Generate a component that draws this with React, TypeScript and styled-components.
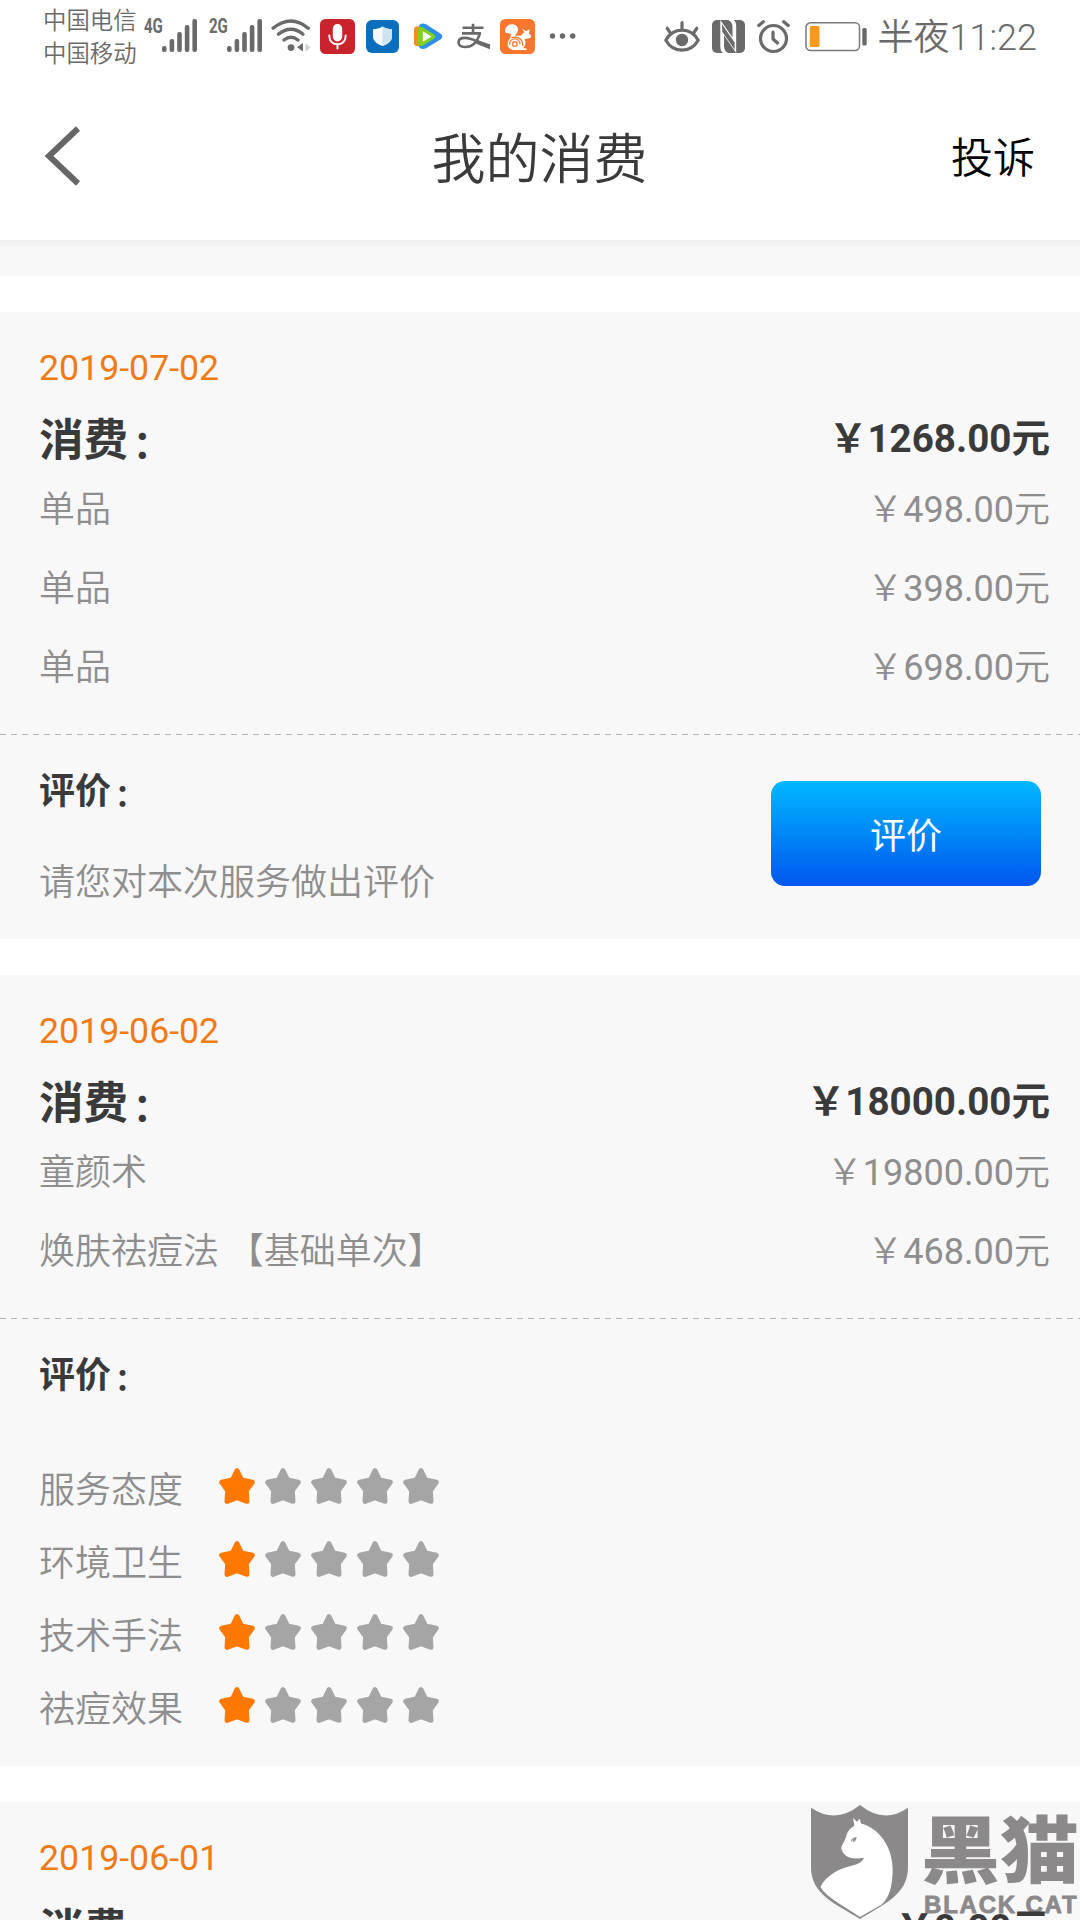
import React from "react";
import styled, { createGlobalStyle } from "styled-components";

const GlobalStyle = createGlobalStyle`
  * { box-sizing: border-box; }
  body { margin: 0; background: #fff; }
`;

const Screen = styled.div`
  width: 1080px;
  height: 1920px;
  overflow: hidden;
  display: flex;
  flex-direction: column;
  background: #fff;
  color: #3a3a3a;
  font-family: Roboto, "Noto Sans CJK SC", sans-serif;
  font-size: 36px;
`;

/* ---------- status bar ---------- */

const StatusBar = styled.div`
  flex: none;
  height: 74px;
  padding: 0 43px 0 43px;
  display: flex;
  justify-content: space-between;
  color: #6a6a6a;
`;

const StatusGroup = styled.div`
  display: flex;
  align-items: flex-start;
`;

const Carriers = styled.div`
  padding-top: 5px;
  width: 101px;
  font-size: 23.4px;
  line-height: 33px;
  font-weight: 350;
  white-space: nowrap;
`;

const NetLabel = styled.span<{ $ml?: number }>`
  width: 18px;
  margin-left: ${(p) => p.$ml ?? 0}px;
  padding-top: 16px;
  font-size: 20px;
  line-height: 20px;
  font-weight: 700;
  white-space: nowrap;
  transform: scaleX(0.75);
  transform-origin: left;
`;

const StatusIcon = styled.svg<{ $w: number; $h: number; $ml: number; $mt: number }>`
  flex: none;
  display: block;
  width: ${(p) => p.$w}px;
  height: ${(p) => p.$h}px;
  margin: ${(p) => p.$mt}px 0 0 ${(p) => p.$ml}px;
`;

const Clock = styled.span`
  margin-left: 11px;
  padding-top: 14px;
  font-size: 36px;
  line-height: 48px;
  font-weight: 350;
  white-space: nowrap;
`;

const SignalBars = () => (
  <StatusIcon $w={35} $h={33} $ml={0} $mt={19} viewBox="0 0 35 33">
    {[27, 20, 13, 6, 0].map((y, i) => (
      <rect key={i} x={i * 7.6} y={y} width={4.6} height={33 - y} rx={2} fill="#6a6a6a" />
    ))}
  </StatusIcon>
);

const WifiIcon = () => (
  <StatusIcon $w={40} $h={33} $ml={9} $mt={19} viewBox="0 0 40 33">
    <g fill="none" stroke="#6a6a6a" strokeWidth="3.4" strokeLinecap="round">
      <path d="M2.2 9.2Q20-5 37.2 9.2" />
      <path d="M7.5 15.2Q20 5.3 32 15.2" />
      <path d="M13 21Q20 15.5 27 21" />
    </g>
    <circle cx="20" cy="28.6" r="3.4" fill="#6a6a6a" />
    <path d="M32 24v8.5l-6-4.2z" fill="#6a6a6a" />
    <path d="M34.5 24.5v8l5-4z" fill="#cfcfcf" />
  </StatusIcon>
);

const MicIcon = () => (
  <StatusIcon $w={35} $h={35} $ml={9} $mt={19} viewBox="0 0 35 35">
    <rect width="35" height="35" rx="5.5" fill="#c9242b" />
    <rect x="12.8" y="5" width="9.4" height="17.5" rx="4.7" fill="#fff" />
    <path d="M9.3 16.5c0 5.500 3.500 8.800 8.200 8.800s8.200-3.300 8.200-8.800M17.500 25v4.500" fill="none" stroke="#fff" strokeWidth="2" strokeLinecap="round" />
  </StatusIcon>
);

const ShieldAppIcon = () => (
  <StatusIcon $w={33} $h={33} $ml={11} $mt={20} viewBox="0 0 33 33">
    <rect width="33" height="33" rx="6" fill="#0c6fbe" />
    <path d="M16.500 6.500c3 2 6 2.700 9.500 2.700v7.300c0 4.500-4.500 8-9.500 9.500-5-1.500-9.500-5-9.500-9.500V9.200c3.500 0 6.500-.7 9.500-2.700z" fill="#f4f9fd" />
    <path d="M16.500 6.500c3 2 6 2.700 9.500 2.700v7.300c0 4.500-4.500 8-9.500 9.500z" fill="#cfe3f2" />
  </StatusIcon>
);

const VideoIcon = () => (
  <StatusIcon $w={29} $h={27} $ml={15} $mt={23} viewBox="0 0 29 27">
    <path d="M5 3C6 .5 9 0 12 1.300l14 9c3 2.200 3 4.500 0 6.500l-14 8.500c-3 1.500-6 .7-7-1.500z" fill="#2f8fe6" />
    <path d="M0 6.500C.3 3.500 2.500 2.700 5 3.700V23c-2.500.8-4.700 0-5-2.500z" fill="#ff8a1e" />
    <path d="M4 5.200c1-1.700 3-1.900 5-.7l11 7c1.800 1.200 1.800 2.800 0 4l-11 7c-2 1.100-4.200 1-5-1z" fill="#7fd01f" />
    <path d="M8.800 8.200l8.700 5.300-8.700 5.200z" fill="#fff" />
  </StatusIcon>
);

const PayIcon = () => (
  <StatusIcon $w={34} $h={27} $ml={14} $mt={23} viewBox="0 0 34 27">
    <g fill="none" stroke="#6a6a6a">
      <path d="M5.500 4.800h21M16 .8v9.200M5 10.400h19" strokeWidth="2.600" />
      <path d="M23 10.300C20.500 18 15.500 24 8.500 24c-4.300 0-7-1.600-7-4.500s2.700-4.600 6.500-4.600c6 0 13 3.800 25 8.200" strokeWidth="2.600" />
    </g>
    <path d="M19 16.800c4.500 1.700 9 3.200 14 4.500v4.900c-5-1.800-10.500-4-15-6.200z" fill="#6a6a6a" />
  </StatusIcon>
);

const SquirrelIcon = () => (
  <StatusIcon $w={35} $h={35} $ml={9} $mt={19} viewBox="0 0 35 35">
    <rect width="35" height="35" rx="5.500" fill="#f8762e" />
    <path d="M5 13C4.800 8 8 5.200 12 5.200c4 0 6.300 2.700 6 6-.3 2.800-2.600 4-2.800 6.300 1.800-1 4-1.300 6-.9.800-1.600 1.900-2.500 3-3.400l-2-3.700 3.800 2.700 3.700-2-.8 4.200c1.800 1.200 2.600 2.800 2 3.900-1.300 1.500-4 1.500-6.300 1.700 1.700 3.400.8 7-1.600 9.200h3.500v1.800H13.500c-4.200-.6-6.400-3.400-5.700-7.300.6-3 3.200-5 3.200-8C10.800 13.500 8 15.800 5 13z" fill="#fff" />
    <path d="M9.500 25.500c0-3.200 2.300-5.600 5.300-5.600s5.200 2.300 5.200 5.200M11.500 18.700c6.500-2 11.500 1.500 11.200 8.300" fill="none" stroke="#f8762e" strokeWidth="1.300" />
    <rect x="12.800" y="23" width="4.200" height="4.200" rx=".8" fill="none" stroke="#f8762e" strokeWidth="1.300" />
  </StatusIcon>
);

const MoreDots = () => (
  <StatusIcon $w={28} $h={8} $ml={14} $mt={32} viewBox="0 0 28 8">
    {[3.5, 13.5, 23.7].map((x) => (
      <circle key={x} cx={x} cy="4" r="2.700" fill="#6a6a6a" />
    ))}
  </StatusIcon>
);

const EyeIcon = () => (
  <StatusIcon $w={36} $h={32} $ml={0} $mt={21} viewBox="0 0 36 32">
    <g fill="none" stroke="#6a6a6a" strokeWidth="3.200" strokeLinecap="round">
      <path d="M1.800 19.200C9.500 5.800 26.500 5.800 34.200 19.200 26.500 32.500 9.500 32.500 1.800 19.200z" strokeLinejoin="round" />
      <path d="M18 7V1.700M6 11.500L3.200 7.300M30 11.500l2.800-4.200" />
    </g>
    <circle cx="18" cy="19" r="6.200" fill="#6a6a6a" />
  </StatusIcon>
);

const NfcIcon = () => (
  <StatusIcon $w={33} $h={33} $ml={12} $mt={20} viewBox="0 0 33 33">
    <rect width="33" height="33" rx="5" fill="#6a6a6a" />
    <path d="M8.300 0L20.500 17.500V6.500c0-3-1.500-5-4-6.500h5.200c1.700 1.300 2.500 3.500 2.500 6.500V33L12 15.500V26c0 3.300 1.500 5.500 4 7h-5.200C9 31.500 8.300 29 8.300 26z" fill="#fff" />
    <path d="M9.800 4L22.600 22.500v7L10.400 12z" fill="#6a6a6a" />
  </StatusIcon>
);

const AlarmIcon = () => (
  <StatusIcon $w={33} $h={34} $ml={12} $mt={20} viewBox="0 0 33 34">
    <g fill="none" stroke="#6a6a6a" strokeWidth="3.200" strokeLinecap="round">
      <circle cx="16.500" cy="18.500" r="13" />
      <path d="M1.800 5.500L6.300 1.800M31.200 5.500l-4.500-3.700" />
      <path d="M16 12v7l4.500 4" strokeLinejoin="round" />
    </g>
  </StatusIcon>
);

const BatteryIcon = () => (
  <StatusIcon $w={62} $h={30} $ml={15} $mt={22} viewBox="0 0 62 30">
    <rect x="1" y=".8" width="53.500" height="27.800" rx="4.500" fill="none" stroke="#7a7a7a" strokeWidth="1.500" />
    <rect x="4.800" y="4" width="9.700" height="21" rx="1.500" fill="#fb9a17" />
    <rect x="57.300" y="6" width="4.400" height="17.500" rx="1.500" fill="#6a6a6a" />
  </StatusIcon>
);

/* ---------- title bar ---------- */

const TitleBar = styled.header`
  flex: none;
  height: 172px;
  padding: 0 45px 6px 44px;
  border-bottom: 6px solid #f1f1f1;
  display: grid;
  grid-template-columns: 120px 1fr 120px;
  align-items: start;
`;

const BackIcon = styled.svg`
  display: block;
  width: 37px;
  height: 60px;
  margin-top: 52px;
`;

const PageTitle = styled.h1`
  margin: 51px 0 0;
  text-align: center;
  font-size: 54px;
  line-height: 72px;
  font-weight: 350;
  color: #3a3a3a;
`;

const Complain = styled.a`
  margin-top: 57px;
  text-align: right;
  font-size: 42px;
  line-height: 56px;
  font-weight: 350;
  color: #000;
`;

/* ---------- list ---------- */

const PreviousCardEnd = styled.div`
  flex: none;
  height: 30px;
  background: #f8f8f8;
`;

const Card = styled.section`
  flex: none;
  position: relative;
  margin-top: 36px;
  padding-top: 33px;
  background: #f8f8f8;
`;

const DateText = styled.div`
  padding-left: 39px;
  font-size: 35.7px;
  line-height: 47px;
  color: #ee7b16;
`;

const TotalRow = styled.div`
  position: relative;
  z-index: 1;
  margin-top: 18px;
  height: 60px;
  padding: 0 30px 0 39px;
  display: flex;
  justify-content: space-between;
  align-items: center;
  font-weight: 700;
`;

const TotalLabel = styled.span`
  padding-top: 1px;
  font-size: 44.6px;
  line-height: 60px;
`;

/* The colon sits nearer the middle of its full-width cell than the font puts it. */
const Colon = styled.span`
  display: inline-block;
  font-size: 0.86em;
  line-height: 1;
  transform: translate(0.12em, 0.05em);
`;

const TotalPrice = styled.span`
  padding-bottom: 6px;
  font-size: 38.6px;
  line-height: 58px;
`;

const ItemList = styled.div`
  padding-bottom: 27px;
`;

const ItemRow = styled.div`
  height: 79px;
  padding: 0 30px 0 39px;
  display: flex;
  justify-content: space-between;
  align-items: center;
  line-height: 48px;
  color: #8e8e8e;
`;

const ItemName = styled.span`
  font-weight: 350;
  white-space: pre;
`;

const ItemPrice = styled.span`
  padding-bottom: 4px;
  font-weight: 400;
`;

const Yuan = styled.span<{ $light?: boolean }>`
  font-family: "Noto Sans CJK SC", sans-serif;
  font-weight: ${(p) => (p.$light ? 350 : "inherit")};
`;

const DashedLine = styled.div`
  height: 1px;
  background: repeating-linear-gradient(90deg, #b4b4b4 0 6px, transparent 6px 11px);
`;

const ReviewSection = styled.div<{ $bottom: number }>`
  padding: 33px 39px ${(p) => p.$bottom}px 39px;
  display: flex;
  justify-content: space-between;
  align-items: flex-start;
`;

const ReviewLabel = styled.div`
  height: 49px;
  line-height: 48px;
  font-weight: 700;
`;

const ReviewHint = styled.div`
  margin-top: 42px;
  line-height: 48px;
  font-weight: 350;
  color: #8e8e8e;
`;

const ReviewButton = styled.button`
  margin-top: 13px;
  width: 270px;
  height: 105px;
  padding: 7px 0 0;
  border: 0;
  border-radius: 14px;
  background: linear-gradient(#00b8ff, #0057ee);
  color: #fff;
  font: 400 36px/48px Roboto, "Noto Sans CJK SC", sans-serif;
`;

const Ratings = styled.div`
  margin-top: 53px;
`;

const RatingRow = styled.div`
  height: 73px;
  display: flex;
  align-items: center;
  line-height: 48px;
  font-weight: 350;
  color: #8e8e8e;
`;

const Stars = styled.div`
  margin-left: 36px;
  padding-bottom: 9px;
  display: flex;
  gap: 10px;
`;

const StarSvg = styled.svg<{ $on: boolean }>`
  display: block;
  width: 36px;
  height: 36px;
  fill: ${(p) => (p.$on ? "#ff7800" : "#a5a5a5")};
  stroke: ${(p) => (p.$on ? "#ff7800" : "#a5a5a5")};
  stroke-width: 5;
  stroke-linejoin: round;
`;

const Star = ({ on }: { on: boolean }) => (
  <StarSvg $on={on} viewBox="0 0 36 36">
    <path d="M18 2.700L22.600 12 33.300 14.300 27.300 22.500 28 33.300 18 29.700 8 33.300 8.700 22.500 2.700 14.300 13.400 12z" />
  </StarSvg>
);

/* ---------- watermark ---------- */

const Watermark = styled.div`
  position: absolute;
  right: 0;
  top: 3px;
  width: 269px;
  display: flex;
  gap: 16px;
  color: #8b898a;
`;

const CatShield = styled.svg`
  flex: none;
  display: block;
  width: 97px;
  height: 114px;
`;

const MarkWords = styled.div`
  display: flex;
  flex-direction: column;
`;

const MarkName = styled.div`
  height: 86px;
  margin-left: -3px;
  padding-top: 1px;
  font-family: "Noto Sans CJK SC", sans-serif;
  font-size: 79px;
  line-height: 79px;
  font-weight: 900;
  white-space: nowrap;
  transform: scaleY(0.92);
`;

const MarkLatin = styled.div`
  font-family: "Liberation Sans", Arial, sans-serif;
  font-size: 24px;
  line-height: 28px;
  font-weight: 700;
  letter-spacing: 1.8px;
  white-space: nowrap;
  -webkit-text-stroke: 0.8px #8b898a;
`;

const BlackCatMark = () => (
  <Watermark>
    <CatShield viewBox="93 76 291 341" preserveAspectRatio="none">
      <path d="M93 84Q168 134 240 76 312 134 384 84V262C384 345 310 372 240 417 170 372 93 345 93 262z" fill="#8b898a" />
      <path d="M219 115L231 126 239 117 243 131C300 145 338 205 338 268 338 318 328 352 305 374L240 411C200 382 142 355 121 321 140 284 180 266 215 258 235 253 247 246 252 234 235 237 220 237 208 233 194 227 184 215 184 203 186 194 193 187 197 175 201 157 208 147 223 138z" fill="#fff" />
      <path d="M213 186c0-7 5-12 17-14-1 9-6 15-13 15l6-10z" fill="#8b898a" />
    </CatShield>
    <MarkWords>
      <MarkName>黑猫</MarkName>
      <MarkLatin>BLACK CAT</MarkLatin>
    </MarkWords>
  </Watermark>
);

/* ---------- data ---------- */

type Item = { name: string; price: string };
type Entry = {
  date: string;
  total: string;
  items: Item[];
  ratings?: { label: string; score: number }[];
};

const entries: Entry[] = [
  {
    date: "2019-07-02",
    total: "1268.00",
    items: [
      { name: "单品", price: "498.00" },
      { name: "单品", price: "398.00" },
      { name: "单品", price: "698.00" },
    ],
  },
  {
    date: "2019-06-02",
    total: "18000.00",
    items: [
      { name: "童颜术", price: "19800.00" },
      { name: "焕肤祛痘法 【基础单次】", price: "468.00" },
    ],
    ratings: [
      { label: "服务态度", score: 1 },
      { label: "环境卫生", score: 1 },
      { label: "技术手法", score: 1 },
      { label: "祛痘效果", score: 1 },
    ],
  },
];

const Total = ({ value }: { value: string }) => (
  <TotalRow>
    <TotalLabel>
      消费<Colon>：</Colon>
    </TotalLabel>
    <TotalPrice>
      <Yuan>￥</Yuan>
      {value}
      <Yuan>元</Yuan>
    </TotalPrice>
  </TotalRow>
);

const EntryCard = ({ entry }: { entry: Entry }) => (
  <Card>
    <DateText>{entry.date}</DateText>
    <Total value={entry.total} />
    <ItemList>
      {entry.items.map((item, i) => (
        <ItemRow key={i}>
          <ItemName>{item.name}</ItemName>
          <ItemPrice>
            <Yuan $light>￥</Yuan>
            {item.price}
            <Yuan $light>元</Yuan>
          </ItemPrice>
        </ItemRow>
      ))}
    </ItemList>
    <DashedLine />
    <ReviewSection $bottom={entry.ratings ? 20 : 32}>
      <div>
        <ReviewLabel>
          评价<Colon>：</Colon>
        </ReviewLabel>
        {entry.ratings ? (
          <Ratings>
            {entry.ratings.map((r) => (
              <RatingRow key={r.label}>
                {r.label}
                <Stars>
                  {[1, 2, 3, 4, 5].map((n) => (
                    <Star key={n} on={n <= r.score} />
                  ))}
                </Stars>
              </RatingRow>
            ))}
          </Ratings>
        ) : (
          <ReviewHint>请您对本次服务做出评价</ReviewHint>
        )}
      </div>
      {!entry.ratings && <ReviewButton>评价</ReviewButton>}
    </ReviewSection>
  </Card>
);

export default function App() {
  return (
    <Screen>
      <GlobalStyle />
      <StatusBar>
        <StatusGroup>
          <Carriers>
            中国电信
            <br />
            中国移动
          </Carriers>
          <NetLabel>4G</NetLabel>
          <SignalBars />
          <NetLabel $ml={12}>2G</NetLabel>
          <SignalBars />
          <WifiIcon />
          <MicIcon />
          <ShieldAppIcon />
          <VideoIcon />
          <PayIcon />
          <SquirrelIcon />
          <MoreDots />
        </StatusGroup>
        <StatusGroup>
          <EyeIcon />
          <NfcIcon />
          <AlarmIcon />
          <BatteryIcon />
          <Clock>半夜11:22</Clock>
        </StatusGroup>
      </StatusBar>
      <TitleBar>
        <BackIcon viewBox="0 0 37 60">
          <path d="M34 2.500L5 30 34 57.500" fill="none" stroke="#666" strokeWidth="6" />
        </BackIcon>
        <PageTitle>我的消费</PageTitle>
        <Complain>投诉</Complain>
      </TitleBar>
      <PreviousCardEnd />
      {entries.map((e) => (
        <EntryCard key={e.date} entry={e} />
      ))}
      <Card>
        <BlackCatMark />
        <DateText>2019-06-01</DateText>
        <Total value="0.00" />
      </Card>
    </Screen>
  );
}
